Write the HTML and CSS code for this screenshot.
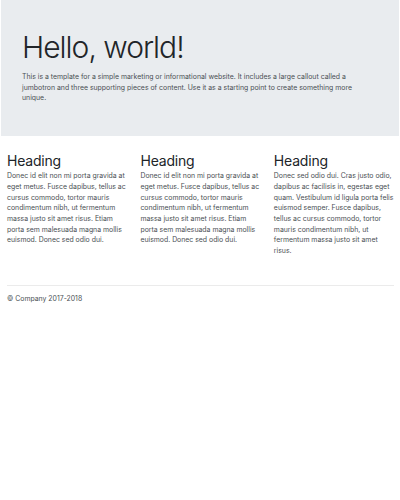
FILE: index.html
```html
<!DOCTYPE html>
<html lang="en">
<head>
<meta charset="utf-8">
<title>Jumbotron</title>
<link rel="stylesheet" href="styles.css">
</head>
<body>
<main>
  <div class="jumbotron">
    <div class="container">
      <h1 class="display">Hello, world!</h1>
      <p class="lead-text">This is a template for a simple marketing or informational website. It includes a large callout called a jumbotron and three supporting pieces of content. Use it as a starting point to create something more unique.</p>
    </div>
  </div>
  <div class="container">
    <div class="row">
      <div class="col">
        <h2>Heading</h2>
        <p>Donec id elit non mi porta gravida at eget metus. Fusce dapibus, tellus ac cursus commodo, tortor mauris condimentum nibh, ut fermentum massa justo sit amet risus. Etiam porta sem malesuada magna mollis euismod. Donec sed odio dui.</p>
      </div>
      <div class="col">
        <h2>Heading</h2>
        <p>Donec id elit non mi porta gravida at eget metus. Fusce dapibus, tellus ac cursus commodo, tortor mauris condimentum nibh, ut fermentum massa justo sit amet risus. Etiam porta sem malesuada magna mollis euismod. Donec sed odio dui.</p>
      </div>
      <div class="col">
        <h2>Heading</h2>
        <p>Donec sed odio dui. Cras justo odio, dapibus ac facilisis in, egestas eget quam. Vestibulum id ligula porta felis euismod semper. Fusce dapibus, tellus ac cursus commodo, tortor mauris condimentum nibh, ut fermentum massa justo sit amet risus.</p>
      </div>
    </div>
    <hr class="rule">
  </div>
</main>
<footer class="container footer">
  <p>&copy; Company 2017-2018</p>
</footer>
</body>
</html>
```

FILE: styles.css
```css
* { box-sizing: border-box; }
body {
  margin: 0;
  font-family: Inter, "Noto Sans", sans-serif;
  font-size: 6.9px;
  line-height: 10.7px;
  color: #4a4f54;
  background: #fff;
}
.container {
  padding: 0 6px 0 7px;
}
.jumbotron {
  background: #e9ecef;
  margin: 0 1px;
  padding: 28px 0 32px;
}
.jumbotron .container {
  padding: 0 22px 0 21px;
}
.display {
  margin: 0 0 6px;
  font-size: 30px;
  font-weight: 300;
  line-height: 38px;
  letter-spacing: -1px;
  color: #212529;
}
.lead-text {
  margin: 0;
}
.row {
  display: grid;
  grid-template-columns: repeat(3, 1fr);
  column-gap: 13.3px;
  padding-top: 16px;
}
.col h2 {
  margin: 0 0 2px;
  font-size: 14px;
  font-weight: 400;
  line-height: 17px;
  letter-spacing: -0.2px;
  color: #212529;
}
.col p {
  margin: 0;
}
.rule {
  margin: 28px 0 0;
  border: 0;
  border-top: 1px solid #ebebeb;
}
.footer p {
  margin: 8px 0;
}
```
